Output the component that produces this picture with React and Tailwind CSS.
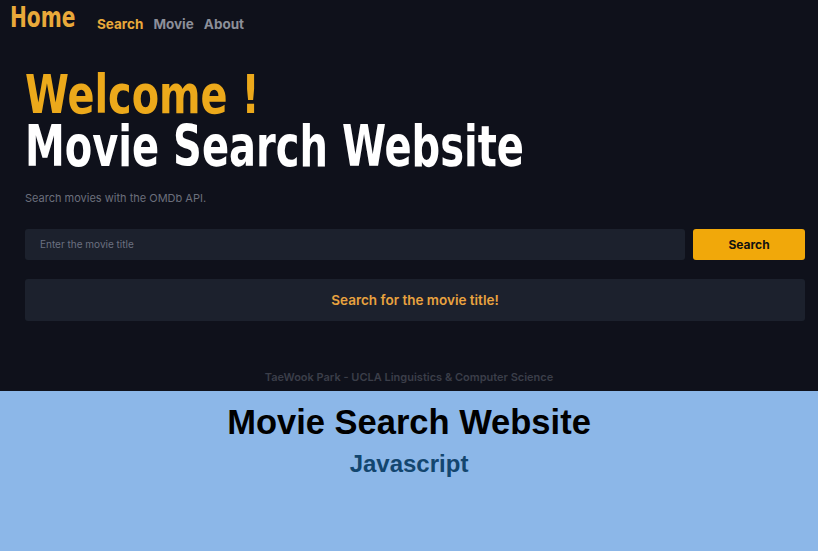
export default function App() {
  const narrow = { fontFamily: '"Liberation Sans Narrow", "DejaVu Sans Condensed", "Liberation Sans", sans-serif' };
  return (
    <div className="w-[818px] h-[551px] flex flex-col font-['Inter',sans-serif]">
      <div className="h-[391px] bg-[#0f111b] flex flex-col">
        <nav className="flex items-end h-[32px] pl-[10px]">
          <span style={narrow} className="inline-block w-[65px] whitespace-nowrap origin-left scale-x-[0.8] text-[28px] font-bold leading-none text-[#e9a93a]">Home</span>
          <div className="flex gap-[10px] ml-[22px] mb-[1px] text-[13.5px] font-bold leading-none">
            <span className="text-[#e9a93a]">Search</span>
            <span className="text-[#8c8f99]">Movie</span>
            <span className="text-[#8c8f99]">About</span>
          </div>
        </nav>
        <div className="pl-[25px] pr-[13px] pt-[38px]">
          <h1 style={narrow} className="whitespace-nowrap origin-left scale-x-[0.82] text-[54px] font-bold leading-[50px] text-[#eca91b]">Welcome !</h1>
          <h1 style={narrow} className="whitespace-nowrap origin-left scale-x-[0.78] text-[57px] font-bold leading-[52px] text-white">Movie Search Website</h1>
          <p className="mt-[21px] text-[11px] text-[#6b6f7b] leading-none">Search movies with the OMDb API.</p>
          <div className="flex gap-[8px] mt-[25px] h-[31px]">
            <div className="flex-1 bg-[#1c212d] rounded-[3px] flex items-center px-[15px] text-[10px] text-[#6b7080]">Enter the movie title</div>
            <button className="w-[112px] bg-[#f1a80a] rounded-[3px] text-[12px] font-bold text-[#111]">Search</button>
          </div>
          <div className="mt-[19px] h-[42px] bg-[#1c212d] rounded-[3px] flex items-center justify-center text-[13.5px] font-semibold text-[#e9a33f]">
            Search for the movie title!
          </div>
        </div>
        <div className="mt-auto mb-[6px] text-center text-[11px] font-semibold text-[#3b3e49]">
          TaeWook Park - UCLA Linguistics &amp; Computer Science
        </div>
      </div>
      <div className="flex-1 bg-[#8cb7e8] flex flex-col items-center font-['Liberation_Sans',sans-serif]">
        <div className="mt-[11px] text-[34.5px] font-bold text-black leading-[40px]">Movie Search Website</div>
        <div className="mt-[8px] text-[24px] font-bold text-[#13466f] leading-[28px]">Javascript</div>
      </div>
    </div>
  );
}
